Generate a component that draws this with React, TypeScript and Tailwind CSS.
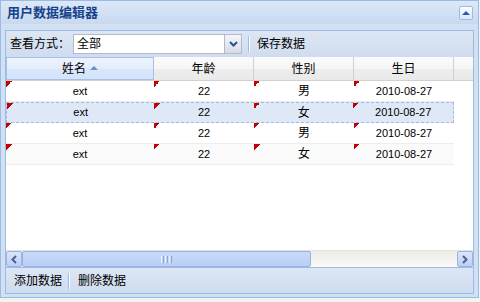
import React from 'react';

const rows = [
  { name: 'ext', age: 22, sex: '男', birth: '2010-08-27' },
  { name: 'ext', age: 22, sex: '女', birth: '2010-08-27' },
  { name: 'ext', age: 22, sex: '男', birth: '2010-08-27' },
  { name: 'ext', age: 22, sex: '女', birth: '2010-08-27' },
];

const Dirty = () => (
  <span className="absolute left-0 top-0 h-[6px] w-[6px] bg-[linear-gradient(135deg,#c40000_50%,transparent_50%)]" />
);

const Cell = ({ w, children, cjk }: { w: string; children: React.ReactNode; cjk?: boolean }) => (
  <div className={`relative flex items-center justify-center ${w} ${cjk ? 'text-[12px]' : 'text-[11px]'}`}>
    <Dirty />
    {children}
  </div>
);

const Sep = () => <div className="mx-[6px] h-[16px] w-[2px] border-l border-[#99bbe8] bg-white" />;

const App = () => {
  return (
    <div className="h-[302px] w-[480px] bg-[#eef5ee] font-['Liberation_Sans','Noto_Sans_CJK_SC',sans-serif] text-black">
      <div className="flex h-[298px] w-[479px] flex-col border border-[#99bbe8] bg-[#d3e0f2]">
        {/* title bar */}
        <div className="flex h-[23px] items-center justify-between bg-[linear-gradient(#dce8f6,#c8d9ef)] pl-[6px] pr-[5px]">
          <span className="text-[13px] font-bold text-[#15428b]">用户数据编辑器</span>
          <div className="flex h-[14px] w-[14px] items-center justify-center rounded-[2px] border border-[#99bbe8] bg-[linear-gradient(#fbfdff,#dbe7f6)]">
            <span className="h-0 w-0 border-x-[4px] border-b-[4px] border-x-transparent border-b-[#2a5aa8]" />
          </div>
        </div>

        <div className="flex flex-1 flex-col px-[4px] pb-[3px] pt-[6px]">
          <div className="flex flex-1 flex-col border border-[#99bbe8] bg-white">
            {/* top toolbar */}
            <div className="flex h-[26px] items-center bg-[linear-gradient(#dce6f4,#cfdcef)] pl-[4px] text-[12px]">
              <span className="mr-[3px]">查看方式：</span>
              <div className="flex h-[20px] w-[169px] border border-[#b5b8c8] bg-white">
                <span className="flex-1 pl-[3px] leading-[18px]">全部</span>
                <div className="flex w-[17px] items-center justify-center border-l border-[#b5b8c8] bg-[linear-gradient(#f4f6fa,#d5dbe6)]">
                  <svg width="9" height="6" viewBox="0 0 9 6">
                    <path d="M1 1 L4.5 4.5 L8 1" stroke="#2f4f8a" strokeWidth="2" fill="none" />
                  </svg>
                </div>
              </div>
              <Sep />
              <span className="ml-[1px]">保存数据</span>
            </div>

            {/* grid header */}
            <div className="flex h-[24px] border-b border-[#d0d0d0] bg-[linear-gradient(#fafafa_0%,#f6f6f6_50%,#ededed_51%,#e9e9e9)] text-[12px]">
              <div className="flex w-[148px] items-center justify-center gap-[4px] border border-[#a7c0e9] bg-[linear-gradient(#ebf3fd_0%,#e3edfb_50%,#d9e7fa_51%,#d5e4f9)]">
                姓名
                <span className="mt-[-1px] h-0 w-0 border-x-[4px] border-b-[4px] border-x-transparent border-b-[#6b8fc7]" />
              </div>
              <div className="flex w-[100px] items-center justify-center border-r border-[#d0d0d0]">年龄</div>
              <div className="flex w-[100px] items-center justify-center border-r border-[#d0d0d0]">性别</div>
              <div className="flex w-[100px] items-center justify-center border-r border-[#d0d0d0]">生日</div>
              <div className="flex-1" />
            </div>

            {/* rows */}
            <div className="flex flex-1 flex-col">
              {rows.map((r, i) => (
                <div
                  key={i}
                  className={`flex h-[21px] w-[448px] ${
                    i === 1
                      ? 'border border-dashed border-[#a3bae9] bg-[#dfe8f6]'
                      : i === 3
                      ? 'border-b border-[#ededed] bg-[#fafafa]'
                      : 'border-b border-[#ededed]'
                  }`}
                >
                  <Cell w="w-[148px]">{r.name}</Cell>
                  <Cell w="w-[100px]">{r.age}</Cell>
                  <Cell w="w-[100px]" cjk>{r.sex}</Cell>
                  <Cell w="w-[100px]">{r.birth}</Cell>
                </div>
              ))}
            </div>

            {/* horizontal scrollbar */}
            <div className="flex h-[17px] border-t border-[#e2e2e2] bg-[linear-gradient(#ecebe6,#fbfaf7)]">
              <div className="flex w-[16px] items-center justify-center rounded-[2px] border border-[#9bb3df] bg-[linear-gradient(#dbe6fb,#bccff5)]">
                <svg width="6" height="9" viewBox="0 0 6 9">
                  <path d="M5 1 L1.5 4.5 L5 8" stroke="#4d6185" strokeWidth="2" fill="none" />
                </svg>
              </div>
              <div className="flex w-[289px] items-center justify-center rounded-[2px] border border-[#9bb3df] bg-[linear-gradient(#c9daf9,#b9cdf5)]">
                <div className="flex gap-[1px]">
                  <span className="h-[7px] w-[1px] bg-[#eef3fd]" />
                  <span className="h-[7px] w-[1px] bg-[#8aa4d4]" />
                  <span className="h-[7px] w-[1px] bg-[#eef3fd]" />
                  <span className="h-[7px] w-[1px] bg-[#8aa4d4]" />
                  <span className="h-[7px] w-[1px] bg-[#eef3fd]" />
                  <span className="h-[7px] w-[1px] bg-[#8aa4d4]" />
                </div>
              </div>
              <div className="flex-1" />
              <div className="flex w-[16px] items-center justify-center rounded-[2px] border border-[#9bb3df] bg-[linear-gradient(#dbe6fb,#bccff5)]">
                <svg width="6" height="9" viewBox="0 0 6 9">
                  <path d="M1 1 L4.5 4.5 L1 8" stroke="#4d6185" strokeWidth="2" fill="none" />
                </svg>
              </div>
            </div>

            {/* bottom toolbar */}
            <div className="flex h-[26px] items-center border-t border-[#99bbe8] bg-[linear-gradient(#dce6f4,#cfdcef)] pl-[8px] text-[12px]">
              <span>添加数据</span>
              <Sep />
              <span className="ml-[2px]">删除数据</span>
            </div>
          </div>
        </div>
      </div>
    </div>
  );
};

export default App;
